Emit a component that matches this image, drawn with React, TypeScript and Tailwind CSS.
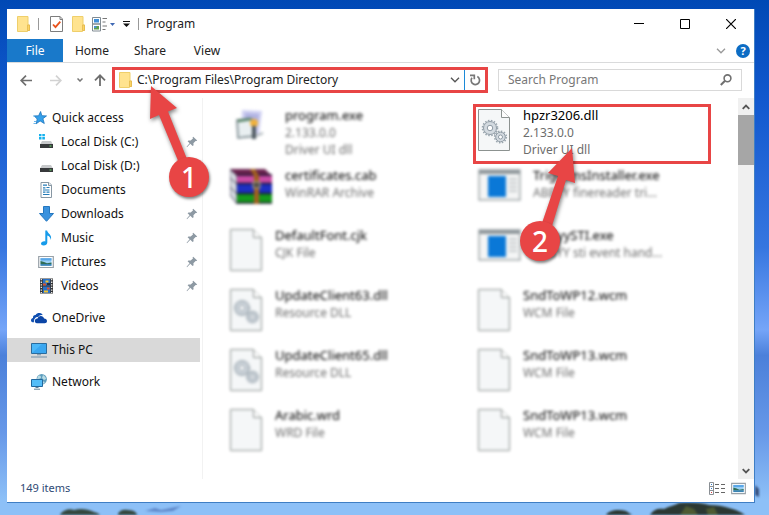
import type { ReactNode } from 'react';

type IconProps = {
  className?: string;
};

type SideItem = {
  label: string;
  icon: ReactNode;
  child?: boolean;
  pinned?: boolean;
  active?: boolean;
  spaced?: boolean;
};

type FileItem = {
  name: string;
  lines: string[];
  kind: 'installer' | 'archive' | 'blank' | 'gears' | 'app';
  highlighted?: boolean;
};

function FolderIcon({ className = 'w-[13px] h-4' }: IconProps) {
  return (
    <svg className={className} viewBox="0 0 13 16" aria-hidden="true">
      <path d="M0.5 0.5h10.5v8.5h1.5v5.5h-2v1h-10z" fill="#ffe38f" stroke="#efcf6b" />
      <path d="M10.5 9h2v5.5h-2z" fill="#fbd465" stroke="#e3b84b" strokeWidth="0.8" />
    </svg>
  );
}

function ChevronIcon({ className = 'w-[10px] h-[6px] text-[#555]' }: IconProps) {
  return (
    <svg className={className} viewBox="0 0 10 6" fill="none" stroke="currentColor" strokeWidth="1.3" aria-hidden="true">
      <path d="M1 0.8l4 4 4-4" />
    </svg>
  );
}

function PinIcon() {
  return (
    <svg className="w-3 h-3 shrink-0" viewBox="0 0 12 12" aria-hidden="true">
      <path d="M7.2 0.8l4 3.6-0.8 0.7-0.8-0.2-2.2 2.3 0.2 2-1 0.9-2.3-2.3L1 11.2l-0.4-0.4L3.6 7.2 1.6 5.2l0.9-0.8 2.2 0.1L7.1 2.3 6.5 1.5z" fill="#8d99a3" />
    </svg>
  );
}

function StarIcon() {
  return (
    <svg className="w-4 h-4" viewBox="0 0 16 16" aria-hidden="true">
      <path d="M9.6 1.5l1.2 4.2 4.7 0.2-3.6 2.8 1.4 4.8-4.2-2.6-3.9 2.9 1-4.8-3-3.1 4.4-0.1z" fill="#35a0ea" stroke="#1c74bd" strokeWidth="0.8" />
      <path d="M2 6h2M3 11.5h2M2.5 13.5h2.5" stroke="#6bb7ec" />
    </svg>
  );
}

function DiskIcon({ system = false }: { system?: boolean }) {
  return (
    <svg className="w-4 h-4" viewBox="0 0 16 16" aria-hidden="true">
      {system && <path d="M1 0h2.5v2.3h-2.5zM4.3 0h2.6v2.3h-2.6zM1 3.1h2.5v2.4h-2.5zM4.3 3.1h2.6v2.4h-2.6z" fill="#14b1ee" />}
      <path d="M4 7h9l2 3.5h-13z" fill="#c7c9cb" />
      <path d="M2 10h13v4h-13z" fill="#37393b" />
      <path d="M11.5 11.5h2v1h-2z" fill="#6be36e" />
    </svg>
  );
}

function DocumentIcon() {
  return (
    <svg className="w-4 h-4" viewBox="0 0 16 16" aria-hidden="true">
      <path d="M3 0.5h8l2.5 2.5v12.5h-10.5z" fill="#fff" stroke="#8797a3" />
      <path d="M10.5 0.5v3h3" fill="#e5ebef" stroke="#8797a3" />
      <path d="M5 5.8h2.4M8.5 5.5h3M5 8h6.5M5 10.2h2.5M8.5 10.2h3M5 12.5h6.5M5 3.2h4" stroke="#257cb8" strokeWidth="1.2" />
    </svg>
  );
}

function DownloadIcon() {
  return (
    <svg className="w-4 h-4" viewBox="0 0 16 16" aria-hidden="true">
      <path d="M5.5 0.5h6v7h4l-7 7.8-7-7.8h4z" fill="#3a92de" stroke="#2577bf" />
    </svg>
  );
}

function MusicIcon() {
  return (
    <svg className="w-4 h-4" viewBox="0 0 16 16" aria-hidden="true">
      <path d="M7.3 0.5h1.8c0.3 3.3 5.4 3.8 3.7 9.6-0.3-2.6-1.6-4-3.5-4.5v7c0 2-1.8 3-3.6 3s-2.7-0.9-2.7-2c0-1.5 2-2.6 4.3-2.2z" fill="#169bea" />
    </svg>
  );
}

function PictureIcon({ className = 'w-4 h-4' }: IconProps) {
  return (
    <svg className={className} viewBox="0 0 16 16" aria-hidden="true">
      <path d="M0.7 2.5h14.6v11h-14.6z" fill="#fff" stroke="#98a1a8" strokeWidth="1.2" />
      <path d="M2.5 4.2h11v7.6h-11z" fill="#9bd0f5" />
      <path d="M2.5 4.2h11v2.3h-11z" fill="#5aa7e8" />
      <path d="M2.5 7l3.5 1 3 1.2 4.5-0.7v1.5h-11z" fill="#2f6d56" />
      <path d="M2.5 10h11v1.8h-11z" fill="#3b84b4" />
    </svg>
  );
}

function VideoIcon() {
  return (
    <svg className="w-4 h-4" viewBox="0 0 16 16" aria-hidden="true">
      <path d="M2 0.5h13v15h-13z" fill="#343434" />
      <path d="M4.8 1h7.4v6.6h-7.4zM4.8 8.5h7.4v6.6h-7.4z" fill="#2970c8" />
      <path d="M3.3 1v14M13.7 1v14" stroke="#f0f0f0" strokeWidth="1.3" strokeDasharray="1.3 1.3" />
      <path d="M7.5 2.5h3v2h-3zM6 12.5h4v2h-4z" fill="#f2c230" />
      <path d="M5 5.5h3v2h-3zM9 9.5h2.6v2h-2.6z" fill="#d9542b" />
      <path d="M9 5h3v2h-3z" fill="#222c3f" />
    </svg>
  );
}

function OneDriveIcon() {
  return (
    <svg className="w-4 h-4" viewBox="0 0 16 16" aria-hidden="true">
      <path d="M3 12.2H1.6C0.5 12.2 0 11 0 10.2c0-1.2 1-2.1 2-2.2C1.6 6 3.2 4.8 4.6 5 5.6 3.2 7.3 2.8 8.8 3c1.5 0.2 2.6 1.2 3 2.2C9.9 4.7 8 5.5 7.2 7 4.8 6.8 2.5 8.8 3 12.2z" fill="#0f4fb1" />
      <path d="M6 13.2c-1.5 0-2.2-1.1-2.2-2.3 0-1.4 1.2-2.5 2.7-2.4 0.5-1.7 2-2.6 3.4-2.5 1.6 0.1 2.7 1.1 3.2 2.5 1.7 0 2.9 1 2.9 2.4 0 1.3-1 2.3-2.3 2.3z" fill="#0b45a6" />
    </svg>
  );
}

function ComputerIcon() {
  return (
    <svg className="w-4 h-4" viewBox="0 0 16 16" aria-hidden="true">
      <path d="M0.5 1.5h15v10h-15z" fill="#4cb8f8" stroke="#2b6c9e" />
      <path d="M1 11L11 2h4v9z" fill="#3aa6f0" />
      <path d="M6 12.8h4M0 15h16" stroke="#7290a8" strokeWidth="1.1" />
    </svg>
  );
}

function NetworkIcon() {
  return (
    <svg className="w-4 h-4" viewBox="0 0 16 16" aria-hidden="true">
      <circle cx="10.7" cy="5.3" r="5.2" fill="#5d9dbd" />
      <path d="M7 2c2-1 3 0 3 1.5S7.5 5 6 5zM12 1c2 1 3 3 3 4l-2 1-2-2zM11 7l3 1-2 2z" fill="#b9dbe4" />
      <path d="M0.5 5.5h11v7h-11z" fill="#54bdf8" stroke="#22689e" />
      <path d="M4.5 13.5h3M3 15.2h6" stroke="#63839a" />
    </svg>
  );
}

function Gear({ cx, cy, r }: { cx: number; cy: number; r: number }) {
  return (
    <g>
      <circle cx={cx} cy={cy} r={r} fill="#d3dae0" stroke="#8f9ba5" strokeWidth="1" />
      <circle cx={cx} cy={cy} r={r + 1} fill="none" stroke="#9aa6af" strokeWidth="1.6" strokeDasharray="1.5 1.5" />
      <circle cx={cx} cy={cy} r={r * 0.42} fill="#fff" stroke="#8f9ba5" strokeWidth="1" />
    </g>
  );
}

function PageIcon({ gears = false }: { gears?: boolean }) {
  return (
    <svg className="w-8 h-[42px]" viewBox="0 0 32 42" aria-hidden="true">
      <path d="M0.5 0.5h23l8 8v33h-31z" fill="#f5f7f8" stroke="#8c9290" />
      <path d="M23.5 0.5v8h8" fill="#fdfdfd" stroke="#8c9290" />
      {gears && (
        <>
          <Gear cx={12} cy={19} r={6.5} />
          <Gear cx={22.5} cy={28} r={4.8} />
        </>
      )}
    </svg>
  );
}

function InstallerIcon() {
  return (
    <svg className="w-8 h-8" viewBox="0 0 32 32" aria-hidden="true">
      <path d="M7 1l20 1-3 23-18-2z" fill="#cfd0f2" />
      <path d="M10 4l14 1-1 8-13-1z" fill="#b1b3e2" />
      <path d="M2 11l15-1 3 17-17 2z" fill="#e9eff1" stroke="#6c7c82" strokeWidth="1.5" />
      <path d="M3 12l13-2" stroke="#4d7f5c" strokeWidth="2.5" />
      <circle cx="19" cy="14" r="4" fill="#f0b13c" />
      <path d="M17 17h4v13h-4z" fill="#4a555d" />
      <path d="M21 27l7-3" stroke="#b0b8bd" strokeWidth="2" />
    </svg>
  );
}

function ArchiveIcon() {
  return (
    <svg className="w-[43px] h-[35px]" viewBox="0 0 43 35" aria-hidden="true">
      <path d="M0 0h35l7 7h-35z" fill="#6b2350" />
      <path d="M0 0l7 7v28l-7-9z" fill="#d7dbe2" stroke="#48465a" />
      <path d="M7 6h35v9h-35z" fill="#c94aa4" />
      <path d="M7 15h35v10h-35z" fill="#1d2fc2" />
      <path d="M7 25h35v9h-35z" fill="#159a1c" />
      <path d="M7 14.5h35M7 24.5h35M7 34h35M7 6h35" stroke="#17152b" strokeWidth="1.5" />
      <path d="M0 9l7 6M0 18l7 7" stroke="#47455a" />
      <path d="M20 0l4 7v28h5v-28l-4-7z" fill="#a2601f" />
      <path d="M23 13h7v6h-7z" fill="#504a42" stroke="#b8b39c" />
    </svg>
  );
}

function AppIcon() {
  return (
    <svg className="w-[43px] h-8" viewBox="0 0 43 32" aria-hidden="true">
      <path d="M1 1h41v30h-41z" fill="#f4f5f5" stroke="#a4aaad" strokeWidth="1.5" />
      <path d="M1 1h41v4h-41z" fill="#8f979b" />
      <path d="M10 7h18v21h-18z" fill="#0a78d7" />
      <path d="M31 10h8M31 14h8M31 18h8M31 22h8" stroke="#c7cbcd" strokeWidth="2" />
    </svg>
  );
}

function FileIcon({ kind }: { kind: FileItem['kind'] }) {
  if (kind === 'installer') return <InstallerIcon />;
  if (kind === 'archive') return <ArchiveIcon />;
  if (kind === 'app') return <AppIcon />;
  return <PageIcon gears={kind === 'gears'} />;
}

const sideItems: SideItem[] = [
  { label: 'Quick access', icon: <StarIcon /> },
  { label: 'Local Disk (C:)', icon: <DiskIcon system />, child: true, pinned: true },
  { label: 'Local Disk (D:)', icon: <DiskIcon />, child: true },
  { label: 'Documents', icon: <DocumentIcon />, child: true },
  { label: 'Downloads', icon: <DownloadIcon />, child: true, pinned: true },
  { label: 'Music', icon: <MusicIcon />, child: true, pinned: true },
  { label: 'Pictures', icon: <PictureIcon />, child: true, pinned: true },
  { label: 'Videos', icon: <VideoIcon />, child: true, pinned: true },
  { label: 'OneDrive', icon: <OneDriveIcon />, spaced: true },
  { label: 'This PC', icon: <ComputerIcon />, spaced: true, active: true },
  { label: 'Network', icon: <NetworkIcon />, spaced: true },
];

const files: FileItem[] = [
  { name: 'program.exe', lines: ['2.133.0.0', 'Driver UI dll'], kind: 'installer' },
  { name: 'hpzr3206.dll', lines: ['2.133.0.0', 'Driver UI dll'], kind: 'gears', highlighted: true },
  { name: 'certificates.cab', lines: ['WinRAR Archive'], kind: 'archive' },
  { name: 'TrigramsInstaller.exe', lines: ['ABBYY finereader tri...'], kind: 'app' },
  { name: 'DefaultFont.cjk', lines: ['CJK File'], kind: 'blank' },
  { name: 'AbbyySTI.exe', lines: ['ABBYY sti event hand...'], kind: 'app' },
  { name: 'UpdateClient63.dll', lines: ['Resource DLL'], kind: 'gears' },
  { name: 'SndToWP12.wcm', lines: ['WCM File'], kind: 'blank' },
  { name: 'UpdateClient65.dll', lines: ['Resource DLL'], kind: 'gears' },
  { name: 'SndToWP13.wcm', lines: ['WCM File'], kind: 'blank' },
  { name: 'Arabic.wrd', lines: ['WRD File'], kind: 'blank' },
  { name: 'SndToWP13.wcm', lines: ['WCM File'], kind: 'blank' },
];

function TitleBar() {
  return (
    <header className="flex h-[30px] items-center">
      <div className="flex flex-1 items-center pl-[10px]">
        <FolderIcon />
        <span className="ml-2 h-3 w-px bg-[#999]" />
        <button type="button" aria-label="Properties" className="ml-[11px]">
          <svg className="h-4 w-[13px]" viewBox="0 0 13 16" aria-hidden="true">
            <path d="M0.5 0.5h9.5l2.5 2.5v12.5h-12z" fill="#fff" stroke="#7d7d7d" />
            <path d="M10 0.5v3h2.5" fill="none" stroke="#7d7d7d" />
            <path d="M3 8.5l2.5 2.7 4.8-5.5" fill="none" stroke="#e8531d" strokeWidth="1.8" />
          </svg>
        </button>
        <button type="button" aria-label="New folder" className="ml-[9px]">
          <FolderIcon />
        </button>
        <button type="button" aria-label="View options" className="ml-[7px] flex items-center gap-[2px]">
          <svg className="h-[15px] w-4" viewBox="0 0 16 15" aria-hidden="true">
            <path d="M0.5 0.5h8v6.5h-8zM0.5 7h8v7h-8z" fill="#fff" stroke="#808b93" />
            <path d="M2 2h5v3.5h-5z" fill="#3f8fd8" />
            <path d="M2 9h5v3.5h-5z" fill="#5fa04c" />
            <path d="M2 9h2.5v2h-2.5z" fill="#4a8fd0" />
            <path d="M10.5 1.5h4.5M10.5 5h3M10.5 9h4.5M10.5 12.5h3" stroke="#777" />
          </svg>
          <svg className="h-[3px] w-[5px]" viewBox="0 0 5 3" aria-hidden="true">
            <path d="M0 0h5l-2.5 3z" fill="#3f68b4" />
          </svg>
        </button>
        <button type="button" aria-label="Customize toolbar" className="ml-2">
          <svg className="h-[6px] w-[7px]" viewBox="0 0 7 6" aria-hidden="true">
            <path d="M0 0h7v1h-7zM0 2.5h7l-3.5 3.5z" fill="#111" />
          </svg>
        </button>
        <span className="ml-2 h-3 w-px bg-[#999]" />
        <h1 className="ml-[7px] text-xs text-[#222]">Program</h1>
      </div>
      <button type="button" aria-label="Minimize" className="flex h-full w-[46px] items-center justify-center">
        <svg className="h-[10px] w-[10px]" viewBox="0 0 10 10" stroke="#000" aria-hidden="true">
          <path d="M0 4.5h10" />
        </svg>
      </button>
      <button type="button" aria-label="Maximize" className="flex h-full w-[46px] items-center justify-center">
        <svg className="h-[10px] w-[10px]" viewBox="0 0 10 10" fill="none" stroke="#000" aria-hidden="true">
          <path d="M0.5 0.5h9v9h-9z" />
        </svg>
      </button>
      <button type="button" aria-label="Close" className="flex h-full w-[46px] items-center justify-center">
        <svg className="h-[10px] w-[10px]" viewBox="0 0 10 10" stroke="#000" strokeWidth="1.2" aria-hidden="true">
          <path d="M0 0l10 10M10 0l-10 10" />
        </svg>
      </button>
    </header>
  );
}

function Ribbon() {
  return (
    <nav className="flex h-6 items-stretch border-b border-[#dadbdc] text-xs text-[#222]">
      <button type="button" className="w-14 bg-[#1979ca] text-white">File</button>
      <button type="button" className="w-[58px]">Home</button>
      <button type="button" className="w-[58px]">Share</button>
      <button type="button" className="w-14">View</button>
      <div className="ml-auto flex items-center gap-[10px] pr-1">
        <button type="button" aria-label="Expand ribbon">
          <ChevronIcon className="h-[6px] w-[10px] text-[#999]" />
        </button>
        <button
          type="button"
          aria-label="Help"
          className="flex h-[14px] w-[14px] items-center justify-center rounded-full bg-[#0c6cc4] text-[11px] leading-none font-bold text-white"
        >
          ?
        </button>
      </div>
    </nav>
  );
}

function Marker({ label, className }: { label: string; className: string }) {
  return (
    <span
      className={`${className} flex h-10 w-10 items-center justify-center rounded-full bg-[#e84545] text-[28px] leading-none font-medium text-white shadow-[1px_2px_3px_rgba(0,0,0,0.5)]`}
    >
      {label}
    </span>
  );
}

function AddressRow() {
  return (
    <div className="flex h-[34px] items-center pr-3">
      <button type="button" aria-label="Back" className="ml-[5px] flex w-7 justify-center">
        <svg className="h-[11px] w-3" viewBox="0 0 12 11" fill="none" stroke="#6e6e6e" strokeWidth="1.7" aria-hidden="true">
          <path d="M12 5.5H1.5M6 0.7L1.2 5.5 6 10.3" />
        </svg>
      </button>
      <button type="button" aria-label="Forward" className="flex w-8 justify-center">
        <svg className="h-[11px] w-3" viewBox="0 0 12 11" fill="none" stroke="#d2d2d2" strokeWidth="1.7" aria-hidden="true">
          <path d="M0 5.5h10.5M6 0.7l4.8 4.8L6 10.3" />
        </svg>
      </button>
      <button type="button" aria-label="Recent locations" className="flex w-4 justify-center">
        <svg className="h-1 w-[6px]" viewBox="0 0 6 4" fill="none" stroke="#777" strokeWidth="1.5" aria-hidden="true">
          <path d="M0.5 0.5l2.5 2.5 2.5-2.5" />
        </svg>
      </button>
      <button type="button" aria-label="Up" className="flex w-6 justify-center">
        <svg className="h-3 w-3" viewBox="0 0 12 12" fill="none" stroke="#6e6e6e" strokeWidth="1.8" aria-hidden="true">
          <path d="M6 12V1.5M1 6.3l5-5 5 5" />
        </svg>
      </button>
      <div className="relative flex h-[26px] min-w-0 flex-1 items-center border-3 border-[#e84545] pl-1">
        <FolderIcon />
        <input
          aria-label="Address"
          defaultValue="C:\Program Files\Program Directory"
          className="ml-[5px] min-w-0 flex-1 bg-transparent text-xs text-[#222] outline-none"
        />
        <button type="button" aria-label="Previous locations" className="flex w-[18px] justify-center">
          <ChevronIcon />
        </button>
        <button type="button" aria-label="Refresh" className="flex h-full w-[21px] items-center justify-center border-l border-[#1c8ad8]">
          <svg className="h-3 w-3" viewBox="0 0 12 12" fill="none" stroke="#777" strokeWidth="1.7" aria-hidden="true">
            <path d="M8.3 2.6A4.2 4.2 0 1 1 3 3.8M1 1.3h4.3v4" />
          </svg>
        </button>
        <svg className="absolute top-4 left-[34px] z-10 h-[80px] w-11 drop-shadow-[1px_2px_2px_rgba(0,0,0,0.5)]" viewBox="0 0 44 80" aria-hidden="true">
          <path d="M2 0L28 22l-9 3.5L38 73l-8 4L10 29l-9 4z" fill="#e84545" />
        </svg>
        <Marker label="1" className="absolute top-[87px] left-[54px] z-10" />
      </div>
      <div className="ml-[10px] flex h-[22px] w-[244px] items-center border border-[#d9d9d9] px-[9px]">
        <input
          type="search"
          aria-label="Search Program"
          placeholder="Search Program"
          className="min-w-0 flex-1 bg-transparent text-xs text-[#222] outline-none placeholder:text-[#777]"
        />
        <button type="button" aria-label="Search">
          <svg className="h-3 w-3" viewBox="0 0 12 12" fill="none" stroke="#707070" strokeWidth="1.6" aria-hidden="true">
            <circle cx="7.5" cy="4.3" r="3.4" />
            <path d="M5 6.8L0.8 11" strokeWidth="2" />
          </svg>
        </button>
      </div>
    </div>
  );
}

function Sidebar() {
  return (
    <nav className="w-[195px] shrink-0 pt-2 text-xs text-[#111]">
      {sideItems.map((item) => (
        <a
          key={item.label}
          href="#"
          className={`mr-[2px] flex h-6 items-center ${item.child ? 'gap-[7px] pl-[31px]' : 'gap-[5px] pl-6'} ${
            item.spaced ? 'mt-2' : ''
          } ${item.active ? 'bg-[#d9d9d9]' : ''}`}
        >
          {item.icon}
          <span className="flex-1">{item.label}</span>
          {item.pinned && (
            <span className="mr-[2px]">
              <PinIcon />
            </span>
          )}
        </a>
      ))}
    </nav>
  );
}

function FileCell({ file }: { file: FileItem }) {
  const wideIcon = file.kind === 'app' || file.kind === 'archive' || file.kind === 'installer';

  return (
    <li
      className={`relative h-[60px] ${
        file.highlighted ? 'border-3 border-[#e84545] px-[2px]' : 'px-[5px] pt-[3px] blur-[0.1rem]'
      }`}
    >
      <div className="flex">
        <div className={`shrink-0 pt-[2px] ${wideIcon ? 'w-[55px]' : 'w-[45px]'} ${file.kind === 'installer' ? 'pl-[5px]' : ''}`}>
          <FileIcon kind={file.kind} />
        </div>
        <div className="min-w-0 text-xs leading-[17px] whitespace-nowrap text-[#6d6d6d]">
          <p className="text-[13px] leading-[17px] text-black">{file.name}</p>
          {file.lines.map((line) => (
            <p key={line}>{line}</p>
          ))}
        </div>
      </div>
      {file.highlighted && (
        <>
          <svg className="absolute top-[41px] left-[62px] z-10 h-[90px] w-11 drop-shadow-[1px_2px_2px_rgba(0,0,0,0.5)]" viewBox="0 0 44 90" aria-hidden="true">
            <path d="M34 0L37 35l-9-3L14 78l-10-3L20 28l-10-3z" fill="#e84545" />
          </svg>
          <Marker label="2" className="absolute top-[114px] left-[44px] z-10" />
        </>
      )}
    </li>
  );
}

function ScrollBar() {
  return (
    <div className="flex w-4 shrink-0 flex-col items-center bg-[#f0f0f0]">
      <button type="button" aria-label="Scroll up" className="flex h-[17px] w-full items-center justify-center">
        <svg className="h-[6px] w-2" viewBox="0 0 8 6" fill="none" stroke="#555" strokeWidth="1.8" aria-hidden="true">
          <path d="M0.7 4.8L4 1.5l3.3 3.3" />
        </svg>
      </button>
      <div className="h-[50px] w-full bg-[#a6a6a6]" />
      <button type="button" aria-label="Scroll down" className="mt-auto flex h-[17px] w-full items-center justify-center">
        <svg className="h-[6px] w-2" viewBox="0 0 8 6" fill="none" stroke="#555" strokeWidth="1.8" aria-hidden="true">
          <path d="M0.7 1.2L4 4.5l3.3-3.3" />
        </svg>
      </button>
    </div>
  );
}

function StatusBar() {
  return (
    <footer className="flex h-[23px] items-center justify-between pr-2 pb-1 pl-[13px] text-[11px] text-[#2f4a75]">
      <span>149 items</span>
      <div className="flex items-center gap-[6px]">
        <button type="button" aria-label="Details view">
          <svg className="h-[13px] w-4" viewBox="0 0 16 13" aria-hidden="true">
            <path d="M0.5 0.5h4v12h-4zM0.5 4.5h4M0.5 8.5h4" fill="none" stroke="#8a8f94" />
            <path d="M6 2.5h10M6 6.5h10M6 10.5h10" stroke="#666" strokeDasharray="4 2" />
            <path d="M2 2h1v1h-1zM2 6h1v1h-1z" fill="#2b7cd0" />
            <path d="M2 10h1v1h-1z" fill="#d83a3a" />
          </svg>
        </button>
        <button type="button" aria-label="Large icons view">
          <PictureIcon className="h-[15px] w-[15px]" />
        </button>
      </div>
    </footer>
  );
}

function Wallpaper() {
  return (
    <svg className="absolute bottom-0 left-0 -z-10 h-[40px] w-full blur-[1px]" viewBox="0 0 769 40" preserveAspectRatio="none" aria-hidden="true">
      <path d="M60 40c2-4 8-7 14-5 6-2 14-1 20 2 4 1 5 2 6 3zM118 40c0-4 5-6 10-5 6 0 9 3 9 5z" fill="#34483f" />
      <path d="M145 36l10-3 6 2 20-4-8 5-12 1z" fill="#5f87c8" />
      <path d="M606 40c3-5 12-6 20-4l6 4zM650 40c4-6 8-7 14-6 5-3 10-3 15-6 14-1 24 0 30 2 8 0 14 1 20 3 8 2 12 4 16 7z" fill="#2b3833" />
      <path d="M680 40l6-9 8 3 4 6zM706 34l8-2 4 8h-10z" fill="#4e5b33" />
      <path d="M755 10l4 4v8l-4-2z" fill="#37507e" />
    </svg>
  );
}

export default function App() {
  return (
    <main className="relative isolate flex min-h-screen flex-col bg-[linear-gradient(180deg,#0049b5_0%,#1259cf_20%,#3676e0_48%,#75a5f8_64%,#4b80da_69%,#6798e8_84%,#8dc0f7_97%)] pt-[9px] pr-[14px] pb-3 pl-[7px] font-['Noto_Sans','Open_Sans',sans-serif]">
      <Wallpaper />
      <section className="flex flex-1 flex-col border-r border-b border-[#3f7ec4] bg-white">
        <TitleBar />
        <Ribbon />
        <AddressRow />
        <div className="mt-px flex flex-1">
          <Sidebar />
          <ul className="grid flex-1 auto-rows-[60px] grid-cols-2 content-start gap-x-[10px] border-l border-[#f2f2f2] pt-[6px] pr-[27px] pb-3 pl-[22px]">
            {files.map((file, index) => (
              <FileCell key={index} file={file} />
            ))}
          </ul>
          <ScrollBar />
        </div>
        <StatusBar />
      </section>
    </main>
  );
}
